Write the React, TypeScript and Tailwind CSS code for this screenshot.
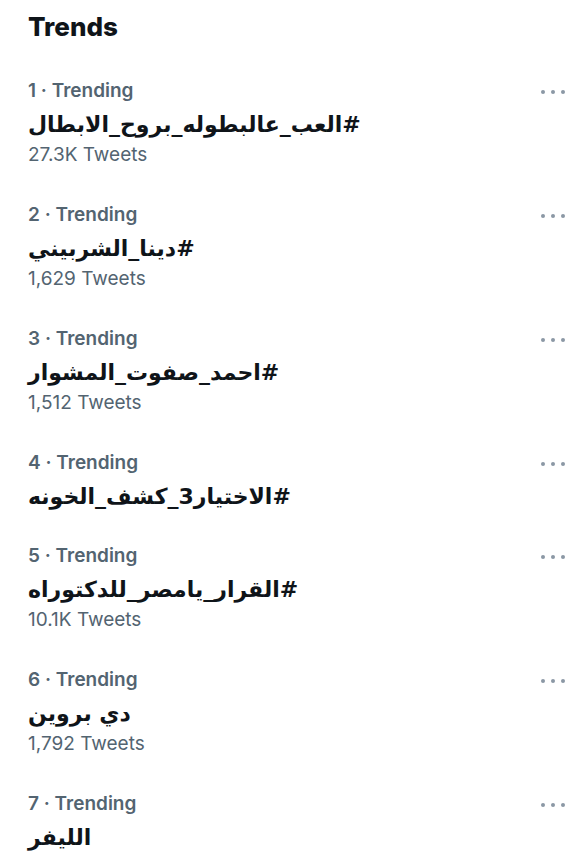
const trends = [
  { rank: 1, tag: "#العب_عالبطوله_بروح_الابطال", tweets: "27.3K Tweets" },
  { rank: 2, tag: "#دينا_الشربيني", tweets: "1,629 Tweets" },
  { rank: 3, tag: "#احمد_صفوت_المشوار", tweets: "1,512 Tweets" },
  { rank: 4, tag: "#الاختيار3_كشف_الخونه", tweets: "" },
  { rank: 5, tag: "#القرار_يامصر_للدكتوراه", tweets: "10.1K Tweets" },
  { rank: 6, tag: "دي بروين", tweets: "1,792 Tweets" },
  { rank: 7, tag: "الليفر", tweets: "" },
]

function Dots() {
  return (
    <div className="flex items-center gap-[6px] pt-[1px]">
      <span className="w-[4px] h-[4px] rounded-full bg-[#8b98a5]" />
      <span className="w-[4px] h-[4px] rounded-full bg-[#8b98a5]" />
      <span className="w-[4px] h-[4px] rounded-full bg-[#8b98a5]" />
    </div>
  )
}

export default function App() {
  return (
    <div className="w-[587px] h-[854px] overflow-hidden bg-white font-['Inter','Liberation_Sans','DejaVu_Sans',sans-serif]">
      <div className="pl-[28px] pr-[22px] pt-[9px]">
        <h1 className="text-[26px] leading-[36px] font-extrabold text-[#0f1419]">Trends</h1>
        <div className="pt-[31px]">
          {trends.map((t) => (
            <div key={t.rank} className={t.tweets ? "pb-[34px]" : "pb-[25px]"}>
              <div className="flex items-center justify-between h-[30px]">
                <div className="text-[19px] font-semibold text-[#536471]">
                  {t.rank} · Trending
                </div>
                <Dots />
              </div>
              <div
                dir="rtl"
                className="text-left h-[38px] leading-[38px] text-[22px] font-bold text-[#0f1419] font-['DejaVu_Sans',sans-serif]"
              >
                {t.tag}
              </div>
              {t.tweets && (
                <div className="h-[22px] leading-[22px] text-[19px] text-[#536471]">{t.tweets}</div>
              )}
            </div>
          ))}
        </div>
      </div>
    </div>
  )
}
